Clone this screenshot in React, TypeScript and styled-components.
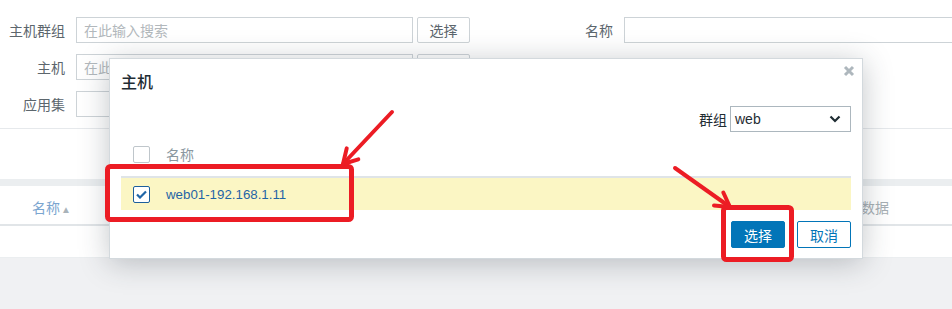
import React from "react";
import styled, { createGlobalStyle } from "styled-components";

const GlobalStyle = createGlobalStyle`
  html, body { margin: 0; padding: 0; }
  body {
    font-family: "Liberation Sans", "Noto Sans CJK SC", Arial, sans-serif;
    font-size: 13px;
    color: #1f2c33;
  }
  * { box-sizing: border-box; }
`;

const Page = styled.div`
  position: relative;
  width: 952px;
  height: 309px;
  overflow: hidden;
  background: #f0f1f3;
`;

const Filter = styled.div`
  background: #fff;
  height: 179px;
  display: flex;
  flex-direction: column;
`;

const FilterFields = styled.div`
  display: flex;
  height: 129px;
  padding-top: 17px;
  border-bottom: 1px solid #e6e9ec;
`;

const FilterColumn = styled.div<{ $offset?: number; $labelWidth: number }>`
  display: flex;
  flex-direction: column;
  gap: 11px;
  margin-left: ${(p) => p.$offset ?? 0}px;
  --label-w: ${(p) => p.$labelWidth}px;
`;

const FilterRow = styled.div`
  display: flex;
  align-items: center;
  height: 26px;
`;

const FilterLabel = styled.label`
  width: var(--label-w);
  padding-right: 11px;
  text-align: right;
  font-size: 14px;
  color: #5c666d;
  white-space: nowrap;
`;

const TextInput = styled.div<{ $width: number }>`
  width: ${(p) => p.$width}px;
  height: 26px;
  border: 1px solid #cdd3d7;
  background: #fff;
  display: flex;
  align-items: center;
  padding-left: 7px;
  font-size: 14px;
  color: #b2b8bc;
`;

const PlainButton = styled.div`
  margin-left: 4px;
  width: 53px;
  height: 26px;
  border: 1px solid #cdd3d7;
  border-radius: 2px;
  background: #fff;
  display: flex;
  align-items: center;
  justify-content: center;
  font-size: 14px;
  color: #5c666d;
`;

const SmallBox = styled.div`
  width: 16px;
  height: 16px;
  border: 1px solid #c8ced2;
  border-radius: 2px;
  margin-left: 1px;
  margin-top: 6px;
  background: #fff;
`;

const Band = styled.div`
  height: 7px;
  background: #ebeef0;
`;

const Table = styled.div`
  background: #fff;
`;

const HeadRow = styled.div`
  display: flex;
  align-items: center;
  height: 40px;
  padding-top: 4px;
  border-bottom: 2px solid #e1e5e8;
`;

const HeadCell = styled.div<{ $left: number; $link?: boolean }>`
  position: relative;
  margin-left: ${(p) => p.$left}px;
  font-size: 14px;
  color: ${(p) => (p.$link ? "#7ba5cf" : "#a7afb4")};
  white-space: nowrap;
`;

const Arrow = styled.span`
  font-size: 10px;
  margin-left: 1px;
  color: #a9b3ba;
`;

const BodyRow = styled.div`
  height: 32px;
  border-bottom: 1px solid #ebeef0;
`;

const Modal = styled.div`
  position: absolute;
  left: 109px;
  top: 58px;
  width: 754px;
  height: 201px;
  background: #fff;
  border: 1px solid #d3d9dd;
  box-shadow: 0 4px 28px rgba(40, 50, 60, 0.28);
  padding: 0 11px 10px 11px;
  display: flex;
  flex-direction: column;
`;

const ModalHeader = styled.div`
  height: 44px;
  display: flex;
  align-items: center;
`;

const ModalTitle = styled.h4`
  margin: 0;
  font-size: 16px;
  font-weight: 500;
  color: #1f2c33;
`;

const CloseButton = styled.div`
  position: absolute;
  top: 5px;
  right: 6px;
  width: 14px;
  height: 14px;
  display: flex;
  align-items: center;
  justify-content: center;
`;

const Controls = styled.div`
  display: flex;
  justify-content: flex-end;
  align-items: center;
  gap: 3px;
  margin-top: 3px;
  height: 26px;
`;

const ControlLabel = styled.span`
  font-size: 14px;
  color: #1f2c33;
`;

const Select = styled.div`
  width: 121px;
  height: 26px;
  border: 1px solid #acb7be;
  display: flex;
  align-items: center;
  justify-content: space-between;
  padding: 0 9px 0 4px;
  font-size: 14px;
  color: #1f2c33;
`;

const ListHead = styled.div`
  display: flex;
  align-items: center;
  height: 46px;
  border-bottom: 2px solid #dfe4e7;
`;

const ListRow = styled.div`
  display: flex;
  align-items: center;
  height: 32px;
  background: #fbf6c4;
`;

const CheckCell = styled.div`
  width: 45px;
  padding-left: 12px;
  display: flex;
  align-items: center;
`;

const Checkbox = styled.div<{ $checked?: boolean }>`
  width: 17px;
  height: 17px;
  border: 1px solid ${(p) => (p.$checked ? "#1d5f9c" : "#bfc6cb")};
  border-radius: 2px;
  background: #fff;
  display: flex;
  align-items: center;
  justify-content: center;
`;

const ColHead = styled.span`
  font-size: 14px;
  color: #8a979f;
`;

const HostLink = styled.span`
  font-size: 13.3px;
  color: #1f65a6;
`;

const Footer = styled.div`
  display: flex;
  justify-content: flex-end;
  gap: 12px;
  padding-top: 11px;
`;

const ActionButton = styled.div<{ $primary?: boolean }>`
  width: 54px;
  height: 27px;
  border-radius: 2px;
  border: 1px solid #0275b8;
  background: ${(p) => (p.$primary ? "#0275b8" : "#fff")};
  color: ${(p) => (p.$primary ? "#fff" : "#0275b8")};
  display: flex;
  align-items: center;
  justify-content: center;
  font-size: 14px;
`;

const Annotations = styled.svg`
  position: absolute;
  left: 0;
  top: 0;
  pointer-events: none;
`;

const RED = "#ec1c24";

export default function App() {
  return (
    <>
      <GlobalStyle />
      <Page>
        <Filter>
          <FilterFields>
            <FilterColumn $labelWidth={76}>
              <FilterRow>
                <FilterLabel>主机群组</FilterLabel>
                <TextInput $width={337}>在此输入搜索</TextInput>
                <PlainButton>选择</PlainButton>
              </FilterRow>
              <FilterRow>
                <FilterLabel>主机</FilterLabel>
                <TextInput $width={337}>在此输入搜索</TextInput>
                <PlainButton>选择</PlainButton>
              </FilterRow>
              <FilterRow>
                <FilterLabel>应用集</FilterLabel>
                <TextInput $width={337} />
                <PlainButton>选择</PlainButton>
              </FilterRow>
            </FilterColumn>
            <FilterColumn $offset={90} $labelWidth={64}>
              <FilterRow>
                <FilterLabel>名称</FilterLabel>
                <TextInput $width={340} />
              </FilterRow>
              <FilterRow>
                <FilterLabel />
                <SmallBox />
              </FilterRow>
            </FilterColumn>
          </FilterFields>
        </Filter>
        <Band />
        <Table>
          <HeadRow>
            <HeadCell $left={32} $link>
              名称<Arrow>▲</Arrow>
            </HeadCell>
            <HeadCell $left={790}>数据</HeadCell>
          </HeadRow>
          <BodyRow />
        </Table>

        <Modal>
          <ModalHeader>
            <ModalTitle>主机</ModalTitle>
          </ModalHeader>
          <CloseButton>
            <svg width="12" height="12" viewBox="0 0 12 12">
              <path d="M2 2 L10 10 M10 2 L2 10" stroke="#aeb7bd" strokeWidth="3" strokeLinecap="butt" />
            </svg>
          </CloseButton>
          <Controls>
            <ControlLabel>群组</ControlLabel>
            <Select>
              <span>web</span>
              <svg width="12" height="8" viewBox="0 0 12 8">
                <path d="M1.5 1.5 L6 6 L10.5 1.5" fill="none" stroke="#1f2c33" strokeWidth="2.2" />
              </svg>
            </Select>
          </Controls>
          <ListHead>
            <CheckCell>
              <Checkbox />
            </CheckCell>
            <ColHead>名称</ColHead>
          </ListHead>
          <ListRow>
            <CheckCell>
              <Checkbox $checked>
                <svg width="11" height="9" viewBox="0 0 11 9">
                  <path d="M1 4.5 L4 7.5 L10 1.5" fill="none" stroke="#1f65a6" strokeWidth="2.2" />
                </svg>
              </Checkbox>
            </CheckCell>
            <HostLink>web01-192.168.1.11</HostLink>
          </ListRow>
          <Footer>
            <ActionButton $primary>选择</ActionButton>
            <ActionButton>取消</ActionButton>
          </Footer>
        </Modal>

        <Annotations width="952" height="309" viewBox="0 0 952 309">
          <rect x="107.5" y="166.5" width="244" height="53" rx="3" fill="none" stroke={RED} strokeWidth="5" />
          <path d="M392 112 L343 164" stroke={RED} strokeWidth="4" strokeLinecap="round" />
          <path d="M346.7 148.4 L343 164 L358.3 159.4" fill="none" stroke={RED} strokeWidth="4" strokeLinecap="round" strokeLinejoin="round" />
          <rect x="723.5" y="207.5" width="68" height="52" rx="3" fill="none" stroke={RED} strokeWidth="5" />
          <path d="M675 168 L730 207" stroke={RED} strokeWidth="4" strokeLinecap="round" />
          <path d="M723.3 192.5 L730 207 L714 205.5" fill="none" stroke={RED} strokeWidth="4" strokeLinecap="round" strokeLinejoin="round" />
        </Annotations>
      </Page>
    </>
  );
}
